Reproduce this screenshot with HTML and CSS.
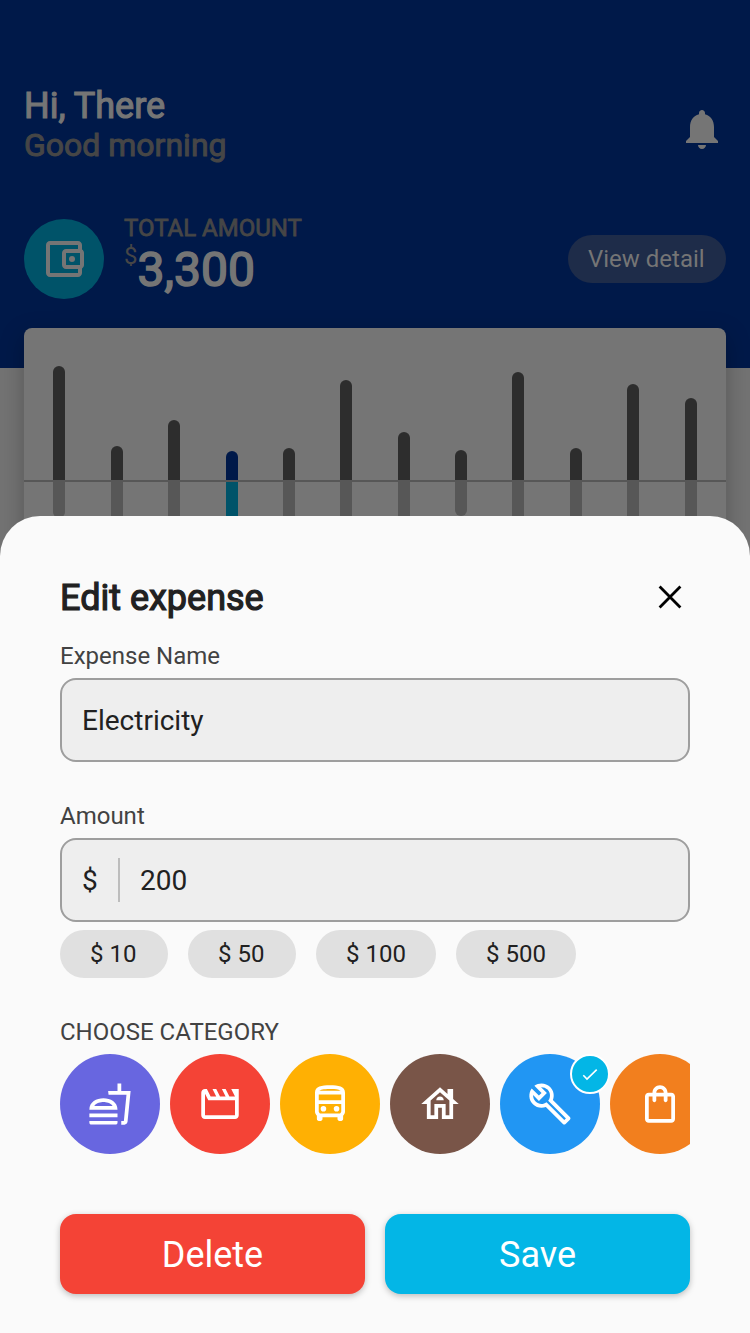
FILE: index.html
```html
<!DOCTYPE html>
<html lang="en">
<head>
<meta charset="utf-8">
<title>Edit expense</title>
<link rel="stylesheet" href="styles.css">
</head>
<body>
<div class="screen">
  <main class="home">
    <header class="top">
      <div class="greeting">
        <div>
          <h1 class="hello">Hi, There</h1>
          <p class="daytime">Good morning</p>
        </div>
        <svg class="bell" viewBox="0 0 24 24"><path d="M12 22c1.1 0 2-.9 2-2h-4c0 1.1.89 2 2 2zM18 16v-5c0-3.07-1.64-5.64-4.5-6.32V4c0-.83-.67-1.5-1.5-1.5s-1.5.67-1.5 1.5v.68C7.63 5.36 6 7.92 6 11v5l-2 2v1h16v-1l-2-2z"/></svg>
      </div>
      <div class="summary">
        <div class="wallet"><svg viewBox="0 0 24 24"><path d="M21 7.28V5c0-1.1-.9-2-2-2H5c-1.11 0-2 .9-2 2v14c0 1.1.89 2 2 2h14c1.1 0 2-.9 2-2v-2.28c.59-.35 1-.98 1-1.72V9c0-.74-.41-1.38-1-1.72zM20 9v6h-7V9h7zM5 19V5h14v2h-6c-1.1 0-2 .9-2 2v6c0 1.1.9 2 2 2h6v2H5z"/><circle cx="16" cy="12" r="1.5"/></svg></div>
        <div class="total">
          <div class="total-label">TOTAL AMOUNT</div>
          <div class="total-value"><span class="currency">$</span><span class="figure">3,300</span></div>
        </div>
        <div class="detail">View detail</div>
      </div>
    </header>
    <section class="chart">
      <div class="bars income">
        <i style="height:114px"></i><i style="height:34px"></i><i style="height:60px"></i><i class="active" style="height:29px"></i><i style="height:32px"></i><i style="height:100px"></i><i style="height:48px"></i><i style="height:30px"></i><i style="height:108px"></i><i style="height:32px"></i><i style="height:96px"></i><i style="height:82px"></i>
      </div>
      <div class="bars outcome">
        <i style="height:36px"></i><i style="height:60px"></i><i style="height:70px"></i><i class="active" style="height:80px"></i><i style="height:60px"></i><i style="height:60px"></i><i style="height:60px"></i><i style="height:34px"></i><i style="height:60px"></i><i style="height:60px"></i><i style="height:60px"></i><i style="height:60px"></i>
      </div>
    </section>
  </main>

  <section class="sheet">
    <div class="sheet-head">
      <h2 class="title">Edit expense</h2>
      <svg class="close" viewBox="0 0 40 40"><path d="M9.6 9.6 30.4 30.4M30.4 9.6 9.6 30.4"/></svg>
    </div>
    <div class="label">Expense Name</div>
    <div class="field">Electricity</div>
    <div class="label second">Amount</div>
    <div class="field"><span class="unit">$</span><span class="divider"></span><span>200</span></div>
    <div class="chips">
      <span class="chip">$ 10</span><span class="chip">$ 50</span><span class="chip wide">$ 100</span><span class="chip wide">$ 500</span>
    </div>
    <div class="label second">CHOOSE CATEGORY</div>
    <div class="categories">
      <div class="category food"><svg viewBox="-14.667 -14.667 53.333 53.333"><path d="M1 21.98c0 .56.45 1.01 1.01 1.01H15c.56 0 1.01-.45 1.01-1.01V21H1v.98zM8.5 8.99C4.75 8.99 1 11 1 15h15c0-4-3.75-6.01-7.5-6.01zM3.62 13c1.11-1.55 3.47-2.01 4.88-2.01s3.77.46 4.88 2.01H3.62zM1 17h15v2H1zM18 5V1h-2v4h-5l.23 2h9.56l-1.4 14H18v2h1.72c.84 0 1.53-.65 1.63-1.47L23 5h-5z"/></svg></div>
      <div class="category movie"><svg viewBox="-14.667 -14.667 53.333 53.333"><path d="M4 6.47L5.76 10H20v8H4V6.47M22 4h-4l2 4h-3l-2-4h-2l2 4h-3l-2-4H8l2 4H7L5 4H4c-1.1 0-1.99.9-1.99 2L2 18c0 1.1.9 2 2 2h16c1.1 0 2-.9 2-2V4z"/></svg></div>
      <div class="category bus"><svg viewBox="-14.667 -14.667 53.333 53.333"><path d="M12 2c-4.42 0-8 .5-8 4v10c0 .88.39 1.67 1 2.22V20c0 .55.45 1 1 1h1c.55 0 1-.45 1-1v-1h8v1c0 .55.45 1 1 1h1c.55 0 1-.45 1-1v-1.78c.61-.55 1-1.34 1-2.22V6c0-3.5-3.58-4-8-4zm5.66 2.99H6.34C6.89 4.46 8.31 4 12 4s5.11.46 5.66.99zm.34 2V10H6V6.99h12zm-.34 9.74l-.29.27H6.63l-.29-.27C6.21 16.62 6 16.37 6 16v-4h12v4c0 .37-.21.62-.34.73z"/><circle cx="8.5" cy="14.5" r="1.5"/><circle cx="15.5" cy="14.5" r="1.5"/></svg></div>
      <div class="category house"><svg viewBox="-14.667 -14.667 53.333 53.333"><path d="M19 9.3V4h-3v2.6L12 3 2 12h3v8h6v-6h2v6h6v-8h3l-3-2.7zM17 18h-2v-6H9v6H7v-7.81l5-4.5 5 4.5V18z"/><path d="M10 10h4c0-1.1-.9-2-2-2s-2 .9-2 2z"/></svg></div>
      <div class="category utility"><svg viewBox="-14.667 -14.667 53.333 53.333"><path d="M22.61 18.99l-9.08-9.08c.93-2.34.45-5.1-1.44-7C9.79.61 6.21.4 3.66 2.26L7.5 6.11 6.08 7.52 2.25 3.69C.39 6.23.6 9.82 2.9 12.11c1.86 1.86 4.57 2.35 6.89 1.48l9.11 9.11c.39.39 1.02.39 1.41 0l2.3-2.3c.4-.38.4-1.01 0-1.41zm-3 1.6l-9.46-9.46c-.61.45-1.29.72-2 .82-1.36.2-2.79-.21-3.83-1.25C3.37 9.76 2.93 8.5 3 7.26l3.09 3.09 4.24-4.24-3.09-3.09c1.24-.07 2.49.37 3.44 1.31 1.08 1.08 1.49 2.57 1.24 3.96-.12.71-.42 1.37-.88 1.96l9.45 9.45-.88.89z"/></svg>
        <span class="selected"><svg viewBox="0 0 20 20"><path d="M3.3 11.3 7 15.1 16.7 5.6"/></svg></span></div>
      <div class="category shopping"><svg viewBox="-14.667 -14.667 53.333 53.333"><path d="M18 6h-2c0-2.21-1.79-4-4-4S8 3.79 8 6H6c-1.1 0-2 .9-2 2v12c0 1.1.9 2 2 2h12c1.1 0 2-.9 2-2V8c0-1.1-.9-2-2-2zm-6-2c1.1 0 2 .9 2 2h-4c0-1.1.9-2 2-2zm6 16H6V8h2v2c0 .55.45 1 1 1s1-.45 1-1V8h4v2c0 .55.45 1 1 1s1-.45 1-1V8h2v12z"/></svg></div>
    </div>
    <div class="actions">
      <div class="button delete">Delete</div>
      <div class="button save">Save</div>
    </div>
  </section>
</div>
</body>
</html>
```
FILE: styles.css
```css
* { box-sizing: border-box; }
body {
  margin: 0;
  font-family: Roboto, "Liberation Sans", sans-serif;
  color: #212121;
}
h1, h2, p { margin: 0; font-weight: 400; }
svg { display: block; fill: currentColor; flex: none; }

.screen {
  width: 750px;
  height: 1333px;
  display: grid;
  grid-template-columns: minmax(0, 1fr);
  grid-template-rows: 516px 817px;
  overflow: hidden;
  background: #737373;
}

/* Dimmed home page */
.home { height: 600px; color: #757575; }
.top { height: 368px; padding: 84px 24px 0; background: #001949; }
.greeting { display: flex; justify-content: space-between; align-items: center; height: 90px; }
.greeting > div { height: 90px; }
.hello { font-size: 36px; line-height: 44px; -webkit-text-stroke: 1.2px; }
.daytime { font-size: 32px; line-height: 34px; color: #464646; -webkit-text-stroke: 1px; }
.bell { width: 48px; height: 48px; }
.summary { display: flex; align-items: center; height: 86px; margin-top: 42px; }
.wallet {
  width: 80px;
  height: 80px;
  margin-right: 20px;
  display: grid;
  place-items: center;
  border-radius: 50%;
  background: #005369;
}
.wallet svg { width: 48px; height: 48px; }
.total { flex: 1; height: 90px; }
.total-label { font-size: 24px; line-height: 28px; color: #464646; -webkit-text-stroke: .8px; }
.total-value { display: flex; height: 56px; }
.currency { font-size: 24px; line-height: 28px; color: #464646; }
.figure { font-size: 48px; line-height: 56px; -webkit-text-stroke: 1.6px; }
.detail {
  width: 158px;
  height: 48px;
  padding-left: 20px;
  border-radius: 24px;
  background: #1e2c49;
  font-size: 24px;
  line-height: 48px;
}

.chart {
  height: 260px;
  margin: -40px 24px 0;
  border-radius: 8px;
  background: #757575;
  box-shadow: 0 8px 24px rgba(0, 0, 0, .25);
}
.bars { display: flex; justify-content: space-between; padding: 0 29.4px; }
.bars i { width: 12px; }
.income { height: 154px; align-items: flex-end; border-bottom: 2px solid #575757; }
.income i { border-radius: 6px 6px 0 0; background: #2d2d2d; }
.income .active { background: #001949; }
.outcome { align-items: flex-start; }
.outcome i { border-radius: 0 0 6px 6px; background: #575757; }
.outcome .active { background: #005369; }

/* Bottom sheet */
.sheet {
  position: relative;
  padding: 60px 60px 0;
  border-radius: 40px 40px 0 0;
  background: #fafafa;
}
.sheet-head { display: flex; justify-content: space-between; align-items: center; height: 42px; margin-bottom: 24px; }
.title { font-size: 36px; line-height: 42px; padding-top: 2px; -webkit-text-stroke: 1.2px; }
.close { width: 40px; height: 40px; fill: none; stroke: #000; stroke-width: 2.8; }
.label { height: 28px; margin-bottom: 8px; font-size: 24px; line-height: 28px; color: #424242; }
.second { margin-top: 40px; }
.field {
  display: flex;
  align-items: center;
  height: 84px;
  padding: 0 20px;
  border: 2px solid #9e9e9e;
  border-radius: 16px;
  background: #eee;
  font-size: 28px;
}
.unit { width: 16px; }
.divider { width: 2px; height: 44px; margin: 0 20px; background: #bdbdbd; }
.chips { display: flex; gap: 20px; margin-top: 8px; }
.chip {
  width: 108px;
  height: 48px;
  padding-left: 30px;
  border-radius: 24px;
  background: #e0e0e0;
  font-size: 24px;
  line-height: 48px;
}
.wide { width: 120px; }
.categories { display: flex; gap: 10px; overflow: hidden; }
.category {
  position: relative;
  flex: none;
  width: 100px;
  height: 100px;
  border-radius: 50%;
  color: #fff;
}
.category > svg { width: 100px; height: 100px; }
.food { background: #6866e0; }
.movie { background: #f44336; }
.bus { background: #ffb003; }
.house { background: #795548; }
.utility { background: #2196f3; z-index: 1; }
.shopping { background: #f27f1e; }
.selected {
  position: absolute;
  top: 0;
  right: -10px;
  width: 40px;
  height: 40px;
  display: grid;
  place-items: center;
  border: 2px solid #fff;
  border-radius: 50%;
  background: #03b6e6;
}
.selected svg { width: 20px; height: 20px; fill: none; stroke: #fff; stroke-width: 1.6; }
.actions { display: flex; gap: 20px; margin-top: 60px; }
.button {
  flex: 1;
  height: 80px;
  border-radius: 16px;
  box-shadow: 0 2px 6px rgba(0, 0, 0, .25);
  color: #fff;
  font-size: 36px;
  line-height: 82px;
  text-align: center;
}
.delete { background: #f44336; }
.save { background: #03b6e6; }
```
